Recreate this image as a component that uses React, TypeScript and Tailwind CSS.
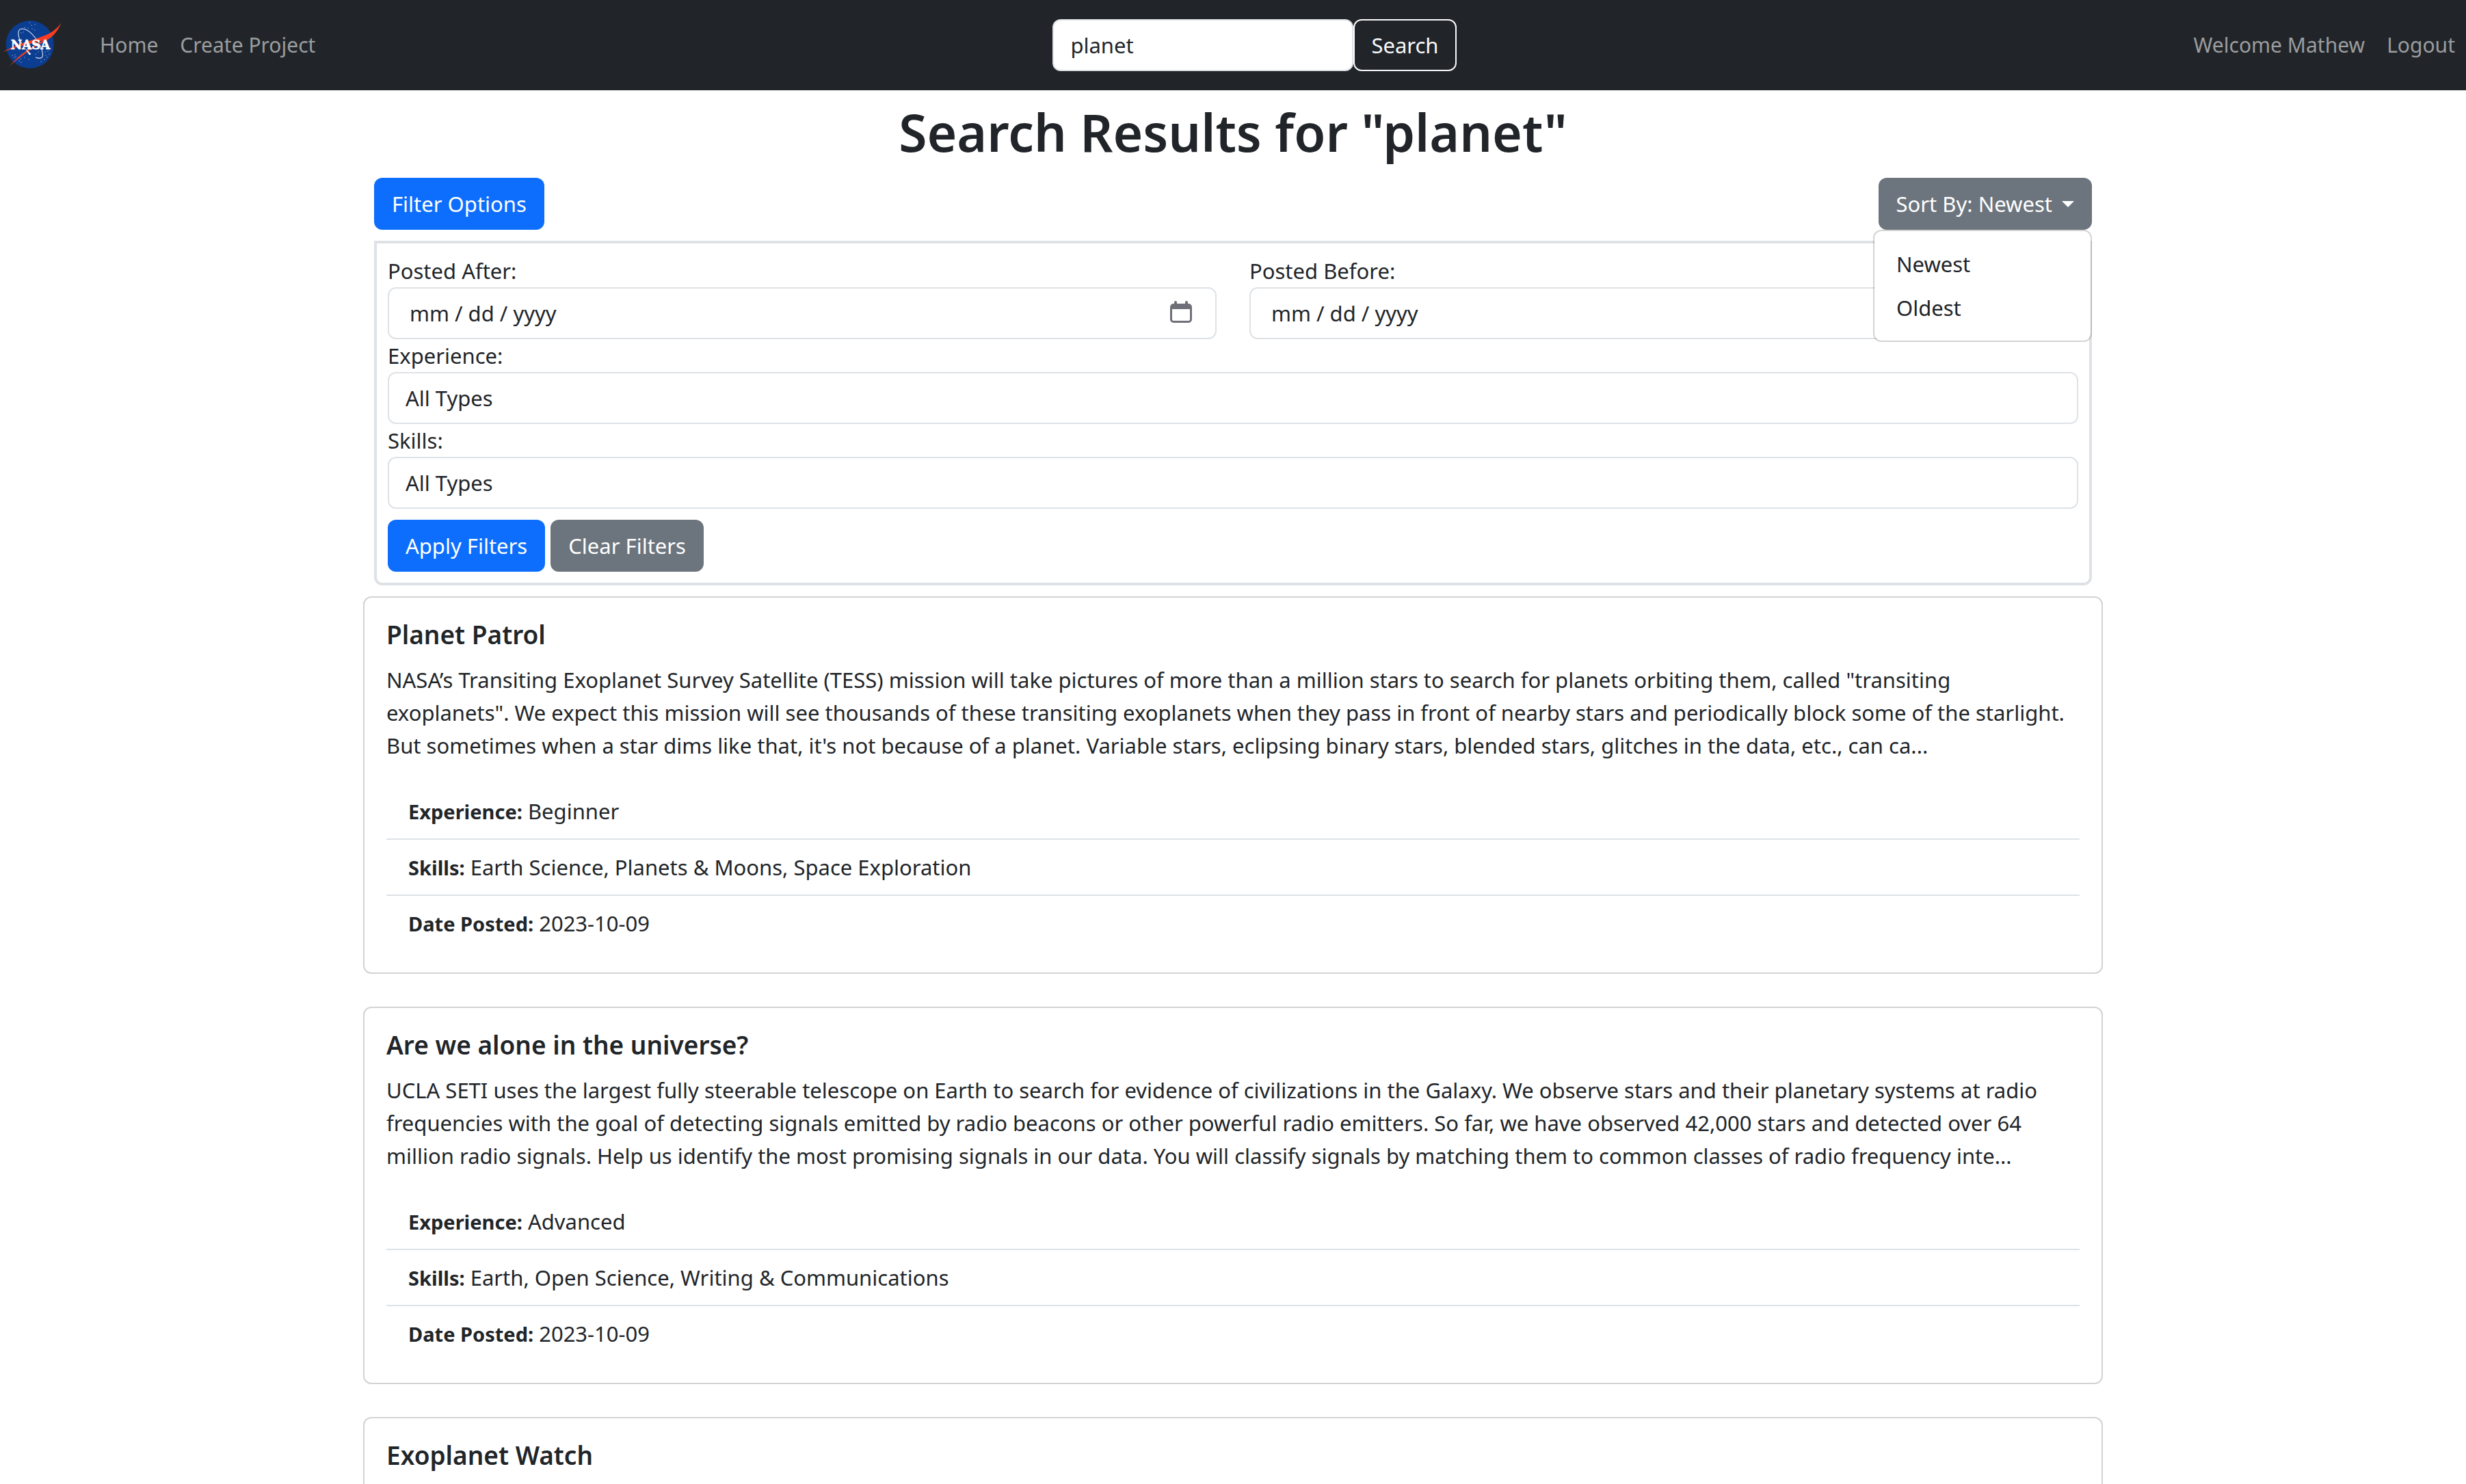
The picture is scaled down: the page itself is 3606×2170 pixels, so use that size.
import { useState } from "react";

type Project = {
  title: string;
  description?: string;
  experience?: string;
  skills?: string;
  date?: string;
};

const projects: Project[] = [
  {
    title: "Planet Patrol",
    description:
      'NASA’s Transiting Exoplanet Survey Satellite (TESS) mission will take pictures of more than a million stars to search for planets orbiting them, called "transiting exoplanets". We expect this mission will see thousands of these transiting exoplanets when they pass in front of nearby stars and periodically block some of the starlight. But sometimes when a star dims like that, it\'s not because of a planet. Variable stars, eclipsing binary stars, blended stars, glitches in the data, etc., can ca...',
    experience: "Beginner",
    skills: "Earth Science, Planets & Moons, Space Exploration",
    date: "2023-10-09",
  },
  {
    title: "Are we alone in the universe?",
    description:
      "UCLA SETI uses the largest fully steerable telescope on Earth to search for evidence of civilizations in the Galaxy. We observe stars and their planetary systems at radio frequencies with the goal of detecting signals emitted by radio beacons or other powerful radio emitters. So far, we have observed 42,000 stars and detected over 64 million radio signals. Help us identify the most promising signals in our data. You will classify signals by matching them to common classes of radio frequency inte...",
    experience: "Advanced",
    skills: "Earth, Open Science, Writing & Communications",
    date: "2023-10-09",
  },
  { title: "Exoplanet Watch" },
];

const stars: [number, number][] = [
  [43, 33], [46, 37], [51, 36], [41, 41], [47, 42], [36, 40], [51, 44], [34, 47], [31, 48],
  [18, 81], [22, 80], [21, 84], [23, 83], [30, 86], [36, 84], [28, 89], [31, 91], [42, 87],
  [66, 76], [70, 75], [72, 79], [67, 81], [69, 84], [65, 87], [60, 90], [56, 76], [52, 79],
];

function NasaLogo() {
  return (
    <svg viewBox="0 21 98 90" className="h-[90px] w-[98px]" role="img" aria-label="NASA">
      <circle cx="43.7" cy="65" r="35" fill="#0b3d91" />
      {stars.map(([x, y]) => (
        <circle key={`${x}-${y}`} cx={x} cy={y} r="0.7" fill="#8fa9d4" />
      ))}
      <path
        d="M52 84 C58 86 63 86 62.500 79 C61 65 45 42 32 42 C23 43 27 56 33 66"
        fill="none"
        stroke="#dfe6f3"
        strokeWidth="1.100"
      />
      <path
        d="M89.500 33.500 C84 41 78 46 70 50 C58 55.500 44 59 30 64 C20 68 11 72 4 76 C14 72.500 26 68 38 65.500 C46 63.500 57 61.500 66 57.500 C58 62.500 50 66.500 42 72 C31 79 22 87 14 96.500 C26 85.500 40 75.500 53 67.500 C64 61 73 57 79 50.500 C83.500 45.500 87 39.500 89.500 33.500 Z"
        fill="#fc3d21"
      />
      <path d="M36 70 L43 80.500 L45.500 79 Z" fill="#fff" />
      <text
        x="44.500"
        y="71.500"
        textAnchor="middle"
        stroke="#fff"
        strokeWidth="0.600"
        className="fill-white font-['DejaVu_Serif'] text-[18px] font-bold"
      >
        NASA
      </text>
    </svg>
  );
}

function CalendarIcon() {
  return (
    <svg viewBox="0 0 32 32" className="size-8" aria-hidden="true" fill="#6f7077">
      <path d="M6 2a2 2 0 0 1 4 0v2h12V2a2 2 0 0 1 4 0v2h1a5 5 0 0 1 5 5v18a5 5 0 0 1-5 5H5a5 5 0 0 1-5-5V9a5 5 0 0 1 5-5h1ZM3 12v15a2 2 0 0 0 2 2h22a2 2 0 0 0 2-2V12Z" />
    </svg>
  );
}

function DateField({ id, label }: { id: string; label: string }) {
  return (
    <div>
      <label htmlFor={id} className="block">
        {label}
      </label>
      <div className="flex items-center rounded-xl border-2 border-[#dee2e6] bg-white py-3 pr-[34px] pl-[30px]">
        <input
          id={id}
          type="text"
          placeholder="mm / dd / yyyy"
          className="h-12 min-w-0 flex-1 placeholder:text-[#212529] focus:outline-none"
        />
        <button type="button" aria-label={`Choose date, ${label}`} className="-mt-1">
          <CalendarIcon />
        </button>
      </div>
    </div>
  );
}

function SelectField({ id, label }: { id: string; label: string }) {
  return (
    <div>
      <label htmlFor={id} className="block">
        {label}
      </label>
      <select
        id={id}
        className="block w-full appearance-none rounded-xl border-2 border-[#dee2e6] bg-white px-6 py-3"
      >
        <option>All Types</option>
      </select>
    </div>
  );
}

function ProjectCard({ project }: { project: Project }) {
  const details = [
    ["Experience:", project.experience],
    ["Skills:", project.skills],
    ["Date Posted:", project.date],
  ].filter(([, value]) => value);
  return (
    <article className="rounded-xl border-2 border-[#d3d3d3] bg-white p-8">
      <h2 className="mb-5 text-[37px] leading-[44px] font-semibold">{project.title}</h2>
      {project.description && <p className="mb-8 pr-3">{project.description}</p>}
      {details.length > 0 && (
        <ul className="divide-y-2 divide-[#dee2e6]">
          {details.map(([name, value]) => (
            <li key={name} className="px-8 py-4">
              <b className="text-[29px] leading-none font-bold">{name}</b> {value}
            </li>
          ))}
        </ul>
      )}
    </article>
  );
}

export default function App() {
  const [query, setQuery] = useState("planet");
  const [sort, setSort] = useState("Newest");
  const [open, setOpen] = useState(true);
  return (
    <div className="bg-white font-['Noto_Sans',sans-serif] text-[31px] leading-[48px] text-[#212529]">
      <nav className="flex items-center justify-between bg-[#212529] py-7 text-[30px] text-[#9b9d9f]">
        <div className="flex items-center">
          <a href="#home" className="-my-2 mr-8">
            <NasaLogo />
          </a>
          <a href="#home" className="px-4">
            Home
          </a>
          <a href="#create" className="px-4">
            Create Project
          </a>
        </div>
        <form className="flex" onSubmit={(e) => e.preventDefault()}>
          <input
            type="search"
            aria-label="Search projects"
            value={query}
            onChange={(e) => setQuery(e.target.value)}
            className="w-[440px] rounded-xl border-2 border-[#dee2e6] bg-white px-6 py-3 text-[31px] text-[#212529]"
          />
          <button
            type="submit"
            className="rounded-xl border-2 border-[#f8f9fa] px-6 py-3 text-[31px] text-[#f8f9fa]"
          >
            Search
          </button>
        </form>
        <div className="flex">
          <a href="#profile" className="px-4">
            Welcome Mathew
          </a>
          <a href="#logout" className="px-4">
            Logout
          </a>
        </div>
      </nav>

      <main className="mx-auto w-full max-w-[2544px]">
        <h1 className="pt-4 text-center text-[75px] leading-[90px] font-semibold">Search Results for "planet"</h1>

        <section className="px-4 pt-[22px] pb-4">
          <div className="mb-4 flex justify-between">
            <button type="button" className="rounded-xl bg-[#0d6efd] px-[26px] py-3.5 text-white">
              Filter Options
            </button>
            <div className="relative">
              <button
                type="button"
                aria-expanded={open}
                onClick={() => setOpen(!open)}
                className="flex items-center gap-3.5 rounded-xl bg-[#6c757d] px-[26px] py-3.5 text-white"
              >
                Sort By: {sort}
                <span className="border-x-9 border-t-9 border-x-transparent border-t-white" />
              </button>
              {open && (
                <ul className="absolute top-full right-0 z-10 w-80 rounded-xl border-2 border-black/17 bg-white bg-clip-padding py-4">
                  {["Newest", "Oldest"].map((option) => (
                    <li key={option}>
                      <button
                        type="button"
                        onClick={() => setSort(option)}
                        className="block w-full px-8 py-2 text-left"
                      >
                        {option}
                      </button>
                    </li>
                  ))}
                </ul>
              )}
            </div>
          </div>

          <form
            className="rounded-b-xl border-4 border-[#dee2e6] p-4"
            onSubmit={(e) => e.preventDefault()}
          >
            <div className="grid grid-cols-2 gap-12">
              <DateField id="posted-after" label="Posted After:" />
              <DateField id="posted-before" label="Posted Before:" />
            </div>
            <SelectField id="experience" label="Experience:" />
            <SelectField id="skills" label="Skills:" />
            <div className="mt-4 flex gap-2">
              <button type="submit" className="rounded-xl bg-[#0d6efd] px-[26px] py-3.5 text-white">
                Apply Filters
              </button>
              <button type="reset" className="rounded-xl bg-[#6c757d] px-[26px] py-3.5 text-white">
                Clear Filters
              </button>
            </div>
          </form>
        </section>

        <section className="flex flex-col gap-12">
          {projects.map((project) => (
            <ProjectCard key={project.title} project={project} />
          ))}
        </section>
      </main>
    </div>
  );
}
